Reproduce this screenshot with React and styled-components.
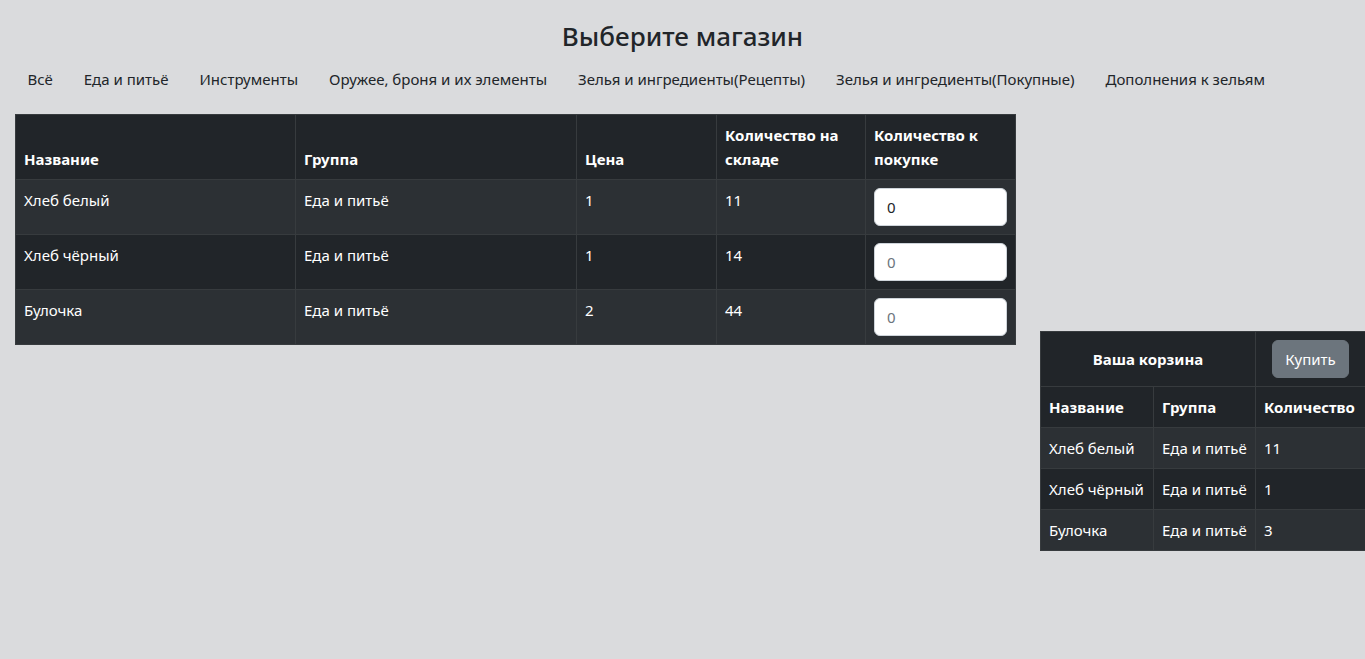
import React from "react";
import styled, { createGlobalStyle } from "styled-components";

const GlobalStyle = createGlobalStyle`
  html, body {
    margin: 0;
    padding: 0;
    background-color: #dadbdd;
    font-family: "Noto Sans", "Open Sans", sans-serif;
    font-size: 16px;
    line-height: 1.5;
    color: #212529;
  }
  * { box-sizing: border-box; }
`;

const colors = {
  dark: "#212529",
  stripe: "#2c3034",
  border: "#373b3e",
  muted: "#6c757d",
};

const Page = styled.div`
  min-height: 659px;
  padding: 0 0 40px 0;
`;

const Title = styled.h3`
  margin: 21px 0 8px 0;
  font-size: 26px;
  font-weight: 500;
  line-height: 1.2;
  text-align: center;
`;

const Nav = styled.nav`
  display: flex;
  padding: 0 12px;
  margin-bottom: 15px;
`;

const NavLink = styled.a`
  display: block;
  padding: 8px 15.5px;
  font-size: 15px;
  color: #212529;
  text-decoration: none;
  cursor: pointer;
`;

const Layout = styled.div`
  display: flex;
  align-items: flex-start;
  gap: 24px;
  padding-left: 15px;
`;

const Table = styled.table`
  width: ${(p) => p.width}px;
  margin-top: ${(p) => p.offset || 0}px;
  border-collapse: collapse;
  table-layout: fixed;
  background-color: ${colors.dark};
  color: #fff;
  font-size: 15px;
`;

const Th = styled.th`
  padding: 8px;
  border: 1px solid ${colors.border};
  text-align: ${(p) => (p.center ? "center" : "left")};
  vertical-align: ${(p) => (p.center ? "middle" : "bottom")};
  font-weight: 700;
  line-height: 24px;
`;

const Row = styled.tr`
  background-color: ${(p) => (p.striped ? colors.stripe : colors.dark)};
`;

const Td = styled.td`
  padding: 8px;
  border: 1px solid ${colors.border};
  vertical-align: top;
  line-height: 24px;
  height: ${(p) => p.h || 40}px;
  white-space: nowrap;
`;

const Input = styled.input`
  display: block;
  width: 100%;
  height: 38px;
  padding: 6px 12px;
  font-family: inherit;
  font-size: 15px;
  color: #212529;
  background: #fff;
  border: 1px solid #ced4da;
  border-radius: 6px;
  outline: none;

  &::placeholder {
    color: ${colors.muted};
  }
`;

const BuyButton = styled.button`
  height: 38px;
  padding: 6px 12px;
  font-family: inherit;
  font-size: 15px;
  color: #fff;
  background-color: ${colors.muted};
  border: 1px solid ${colors.muted};
  border-radius: 6px;
  cursor: pointer;
`;

const categories = [
  "Всё",
  "Еда и питьё",
  "Инструменты",
  "Оружее, броня и их элементы",
  "Зелья и ингредиенты(Рецепты)",
  "Зелья и ингредиенты(Покупные)",
  "Дополнения к зельям",
];

const items = [
  { name: "Хлеб белый", group: "Еда и питьё", price: 1, stock: 11, value: "0" },
  { name: "Хлеб чёрный", group: "Еда и питьё", price: 1, stock: 14 },
  { name: "Булочка", group: "Еда и питьё", price: 2, stock: 44 },
];

const cart = [
  { name: "Хлеб белый", group: "Еда и питьё", count: 11 },
  { name: "Хлеб чёрный", group: "Еда и питьё", count: 1 },
  { name: "Булочка", group: "Еда и питьё", count: 3 },
];

export default function App() {
  return (
    <Page>
      <GlobalStyle />
      <Title>Выберите магазин</Title>
      <Nav>
        {categories.map((c) => (
          <NavLink key={c}>{c}</NavLink>
        ))}
      </Nav>
      <Layout>
        <Table width={1000}>
          <colgroup>
            <col style={{ width: 280 }} />
            <col style={{ width: 281 }} />
            <col style={{ width: 140 }} />
            <col style={{ width: 149 }} />
            <col style={{ width: 150 }} />
          </colgroup>
          <thead>
            <Row>
              <Th>Название</Th>
              <Th>Группа</Th>
              <Th>Цена</Th>
              <Th>Количество на складе</Th>
              <Th>Количество к покупке</Th>
            </Row>
          </thead>
          <tbody>
            {items.map((it, i) => (
              <Row key={it.name} striped={i % 2 === 0}>
                <Td h={54}>{it.name}</Td>
                <Td h={54}>{it.group}</Td>
                <Td h={54}>{it.price}</Td>
                <Td h={54}>{it.stock}</Td>
                <Td h={54}>
                  <Input type="number" placeholder="0" defaultValue={it.value} />
                </Td>
              </Row>
            ))}
          </tbody>
        </Table>
        <Table width={325} offset={217}>
          <colgroup>
            <col style={{ width: 113 }} />
            <col style={{ width: 102 }} />
            <col style={{ width: 110 }} />
          </colgroup>
          <thead>
            <Row>
              <Th center colSpan={2}>Ваша корзина</Th>
              <Th center>
                <BuyButton>Купить</BuyButton>
              </Th>
            </Row>
            <Row>
              <Th>Название</Th>
              <Th>Группа</Th>
              <Th>Количество</Th>
            </Row>
          </thead>
          <tbody>
            {cart.map((c, i) => (
              <Row key={c.name} striped={i % 2 === 0}>
                <Td>{c.name}</Td>
                <Td>{c.group}</Td>
                <Td>{c.count}</Td>
              </Row>
            ))}
          </tbody>
        </Table>
      </Layout>
    </Page>
  );
}
